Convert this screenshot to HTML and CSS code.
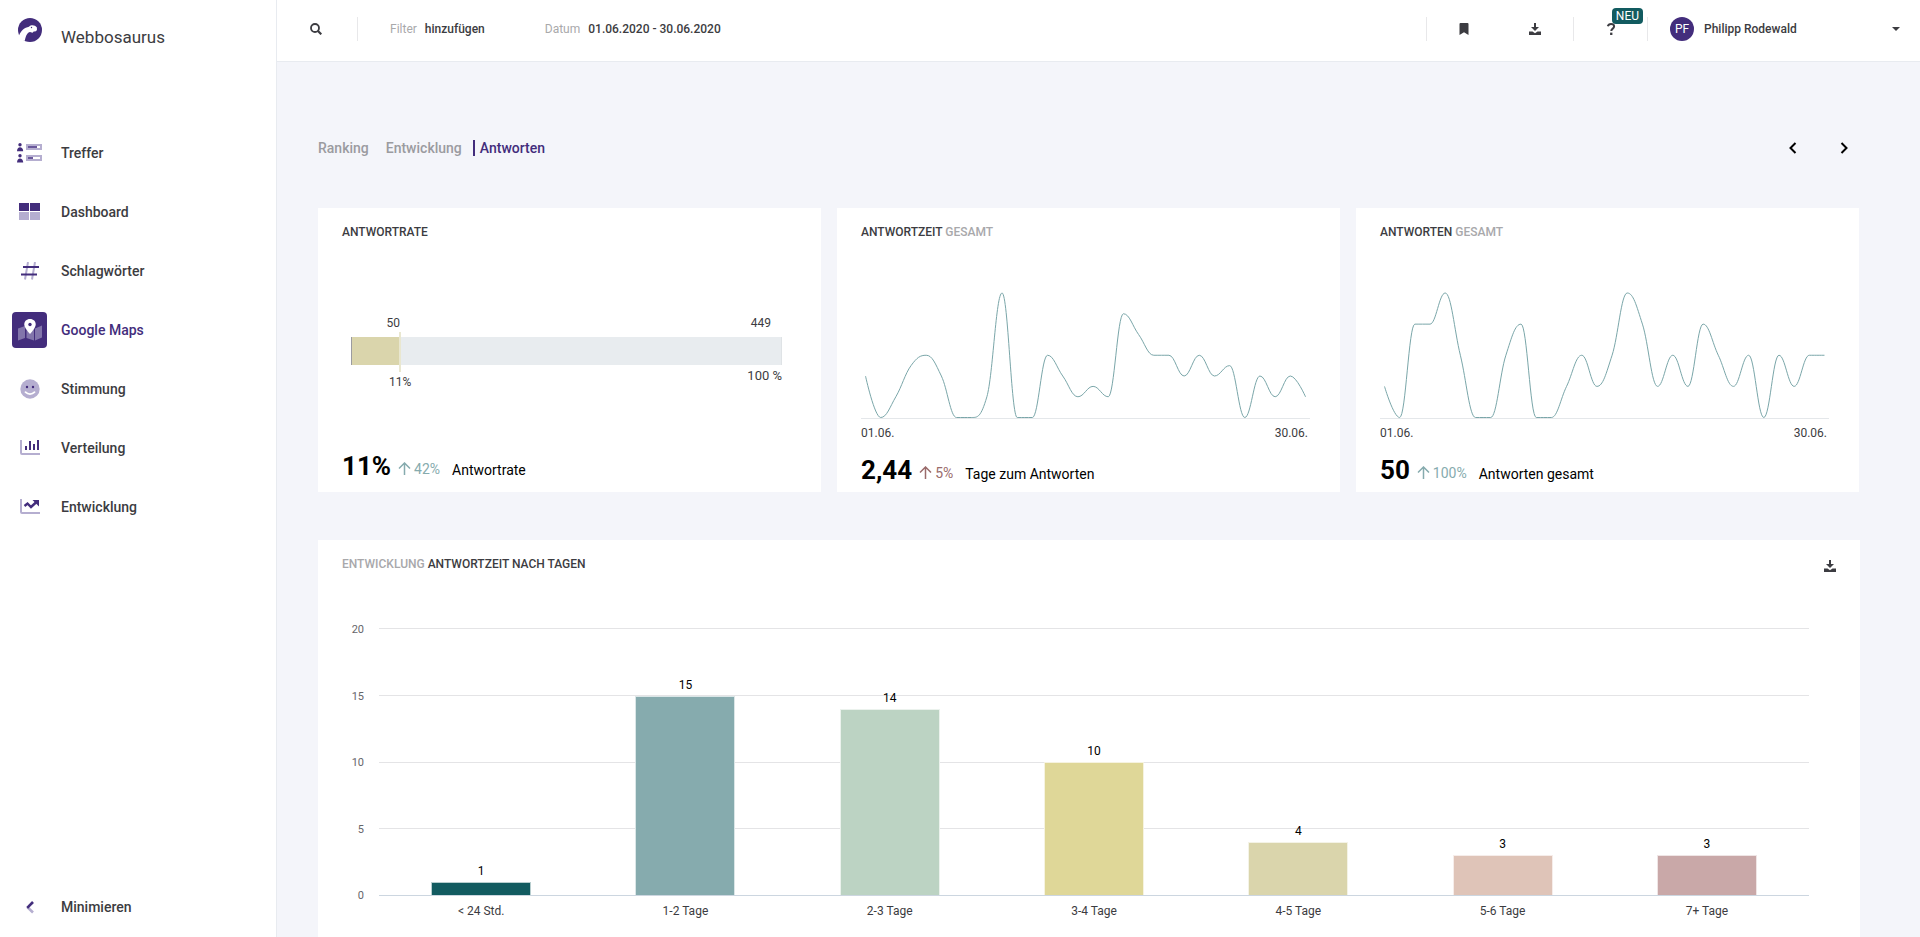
FILE: index.html
```html
<!DOCTYPE html>
<html lang="de">
<head>
<meta charset="utf-8">
<title>Webbosaurus – Google Maps Antworten</title>
<link rel="stylesheet" href="styles.css">
</head>
<body>
<div class="app">
  <aside class="sidebar">
    <a class="brand" href="#">
      <span class="icon-slot"><svg width="24" height="24" viewBox="0 0 24 24"><circle cx="12" cy="12" r="12" fill="#432d7c"/><path d="M1 17.500C3 12.500 6.500 9.500 11 8.700C12.500 7 15 6.800 17 7.800L18.800 9.200L19 11.500C18.600 13.200 17.500 13.800 16 13.300L14.500 14.800L12 14C9.500 14.500 8 17 6.800 22.800L3 22L0 18Z" fill="#fff"/><circle cx="13.500" cy="9.500" r=".7" fill="#432d7c"/></svg></span>
      <span class="brand-name">Webbosaurus</span>
    </a>
    <nav class="nav">
      <a class="nav-item" href="#">
        <span class="icon-slot"><svg width="25" height="20" viewBox="0 0 25 20"><g fill="#432d7c"><circle cx="3" cy="1.800" r="1.700"/><path d="M0 8.200C0 5.500 1.500 4.300 3 4.300S6.200 5.500 6.200 8.200Z"/><circle cx="3" cy="12.800" r="1.700"/><path d="M0 19.600C0 16.700 1.500 15.500 3 15.500S6.200 16.700 6.200 19.600Z"/></g><path d="M9 1h16v6H9zM9 12h16v6H9z" fill="#b5aed0"/><path d="M20 3h3v2h-3zM16 14h7v2h-7z" fill="#fff"/><path d="M11 3h9v2h-9zM11 14h5v2h-5z" fill="#6a589b"/></svg></span>
        <span>Treffer</span>
      </a>
      <a class="nav-item" href="#">
        <span class="icon-slot"><svg width="21" height="18" viewBox="0 0 21 18"><path d="M0 0h10v8H0zM11 0h10v8h-10z" fill="#432d7c"/><path d="M0 9h10v8H0zM11 9h10v8h-10z" fill="#b5aed0"/></svg></span>
        <span>Dashboard</span>
      </a>
      <a class="nav-item" href="#">
        <span class="icon-slot"><svg width="18" height="18" viewBox="0 0 18 18" fill="none" stroke-width="2"><path d="M7 0L4 17.500M14 0L11 17.500" stroke="#b5aed0"/><path d="M2 5H18M0 12.500H16" stroke="#432d7c" stroke-width="2.200"/></svg></span>
        <span>Schlagwörter</span>
      </a>
      <a class="nav-item nav-item-active" href="#">
        <span class="icon-slot"><svg width="24" height="22" viewBox="0 0 24 22"><path d="M0 9.500L7 7V19L0 21.500zM8.500 7L16 10V21.500L8.500 19zM17 9.500L24 6.500V18.500L17 21.500z" fill="#8275ab"/><path d="M12 0C8.500 0 6.300 2.300 6.300 5.500C6.300 8 9 11.500 12 15C15 11.500 17.700 8 17.700 5.500C17.700 2.300 15.500 0 12 0z" fill="#fff"/><circle cx="12" cy="5.500" r="1.700" fill="#432d7c"/></svg></span>
        <span>Google Maps</span>
      </a>
      <a class="nav-item" href="#">
        <span class="icon-slot"><svg width="20" height="20" viewBox="0 0 20 20"><circle cx="10" cy="10" r="9.700" fill="#b5aed0"/><path d="M5.500 13.200C8 15.700 12 15.700 14.500 13.200" fill="none" stroke="#fff" stroke-width="1.800" stroke-linecap="round"/><circle cx="7" cy="8" r="1.200" fill="#432d7c"/><circle cx="13" cy="8" r="1.200" fill="#432d7c"/></svg></span>
        <span>Stimmung</span>
      </a>
      <a class="nav-item" href="#">
        <span class="icon-slot"><svg width="20" height="16" viewBox="0 0 20 16"><path d="M0 0h2v13h18v2H2q-2 0-2-2z" fill="#b5aed0"/><path d="M5 6h2v4H5zM9 1h2v9H9zM13 4h2v6h-2zM17 0h2v10h-2z" fill="#432d7c"/></svg></span>
        <span>Verteilung</span>
      </a>
      <a class="nav-item" href="#">
        <span class="icon-slot"><svg width="20" height="16" viewBox="0 0 20 16"><path d="M0 0h2v13h18v2H2q-2 0-2-2z" fill="#b5aed0"/><path d="M4.500 7L7.500 4.500L11 8L16.500 3" fill="none" stroke="#432d7c" stroke-width="2.400"/><path d="M12.500 1H19V7.500z" fill="#432d7c"/></svg></span>
        <span>Entwicklung</span>
      </a>
    </nav>
    <button class="nav-item nav-toggle" type="button">
      <span class="icon-slot"><svg width="8" height="13" viewBox="0 0 8 13" fill="none" stroke-width="2.600"><path d="M1.500 6.200L7 11.500" stroke="#b5aed0"/><path d="M7 1L1.200 6.800" stroke="#432d7c"/></svg></span>
      <span>Minimieren</span>
    </button>
  </aside>

  <div class="page">
    <header class="topbar">
      <button class="icon-button search" type="button" aria-label="Suche"><svg width="12" height="12" viewBox="0 0 12 12" fill="none" stroke="#3c3c41"><circle cx="5" cy="5" r="4" stroke-width="1.800"/><path d="M8 8L11.300 11.300" stroke-width="2.200"/></svg></button>
      <button class="filter" type="button"><span class="muted">Filter</span><strong>hinzufügen</strong></button>
      <button class="filter filter-date" type="button"><span class="muted">Datum</span><strong>01.06.2020 - 30.06.2020</strong></button>
      <div class="tools">
        <button class="icon-button" type="button" aria-label="Lesezeichen"><svg width="10" height="12" viewBox="0 0 10 12"><path d="M.5 1q0-1 1-1h7q1 0 1 1v11L5 9.300L.5 12z" fill="#3c3c41"/></svg></button>
        <button class="icon-button" type="button" aria-label="Herunterladen"><svg width="12" height="12" viewBox="0 0 12 12" fill="#3c3c41"><path d="M5 0h2v4h3L6 8L2 4h3z"/><path d="M0 8.500h3.500L6 10.300L8.500 8.500H12V12H0z"/></svg></button>
      </div>
      <div class="help"><button class="icon-button" type="button" aria-label="Hilfe"><svg width="10" height="12" viewBox="0 0 10 12"><path d="M1.800 3.300C2.300 1.700 3.500 1.100 5 1.100C7 1.100 8.100 2 8.100 3.500C8.100 5.700 5.300 5.500 5.300 7.900" fill="none" stroke="#3c3c41" stroke-width="2"/><path d="M4.100 9.600h2.300V12H4.100z" fill="#3c3c41"/></svg></button><span class="badge">NEU</span></div>
      <button class="account" type="button"><span class="avatar">PF</span><strong>Philipp Rodewald</strong><svg class="caret" width="8" height="4" viewBox="0 0 8 4"><path d="M0 0h8L4 4z" fill="#3c3c41"/></svg></button>
    </header>

    <main class="content">
      <div class="tabs-row">
        <nav class="tabs">
          <a class="tab" href="#">Ranking</a>
          <a class="tab" href="#">Entwicklung</a>
          <a class="tab tab-active" href="#">Antworten</a>
        </nav>
        <div class="pager">
          <button class="icon-button" type="button" aria-label="Zurück"><svg width="8" height="12" viewBox="0 0 8 12"><path d="M6.500 1L1.500 6L6.500 11" fill="none" stroke="#000" stroke-width="2"/></svg></button>
          <button class="icon-button" type="button" aria-label="Weiter"><svg width="8" height="12" viewBox="0 0 8 12"><path d="M1.500 1L6.500 6L1.500 11" fill="none" stroke="#000" stroke-width="2"/></svg></button>
        </div>
      </div>

      <div class="kpis">
        <section class="card kpi kpi-rate">
          <h2 class="card-title">ANTWORTRATE</h2>
          <div class="gauge">
            <div class="gauge-top"><span class="gauge-part">50</span><span>449</span></div>
            <div class="gauge-track"><div class="gauge-fill" style="width:11.1%"></div></div>
            <div class="gauge-bottom"><span class="gauge-share">11%</span><span class="gauge-total">100 %</span></div>
          </div>
          <p class="figure"><b>11%</b><span class="trend"><svg width="13" height="13" viewBox="0 0 13 13"><path d="M6.500 13V1.500M1 6.500L6.500 1L12 6.500" fill="none" stroke="currentColor" stroke-width="1.500"/></svg>42%</span><span>Antwortrate</span></p>
        </section>
        <section class="card kpi">
          <h2 class="card-title">ANTWORTZEIT <span>GESAMT</span></h2>
          <svg class="spark" viewBox="0 0 449 141" preserveAspectRatio="none" data-max="12" data-values="4,0,2,5,6,4,0,0,2,12,0,0,6,4,2,3,2,10,8,6,6,4,6,4,5,0,4,2,4,2"></svg>
          <div class="range"><span>01.06.</span><span>30.06.</span></div>
          <p class="figure"><b>2,44</b><span class="trend trend-bad"><svg width="13" height="13" viewBox="0 0 13 13"><path d="M6.500 13V1.500M1 6.500L6.500 1L12 6.500" fill="none" stroke="currentColor" stroke-width="1.500"/></svg>5%</span><span>Tage zum Antworten</span></p>
        </section>
        <section class="card kpi">
          <h2 class="card-title">ANTWORTEN <span>GESAMT</span></h2>
          <svg class="spark" viewBox="0 0 449 141" preserveAspectRatio="none" data-max="4" data-values="1,0,3,3,4,2,0,0,2,3,0,0,1,2,1,2,4,3,1,2,1,3,2,1,2,0,2,1,2,2"></svg>
          <div class="range"><span>01.06.</span><span>30.06.</span></div>
          <p class="figure"><b>50</b><span class="trend"><svg width="13" height="13" viewBox="0 0 13 13"><path d="M6.500 13V1.500M1 6.500L6.500 1L12 6.500" fill="none" stroke="currentColor" stroke-width="1.500"/></svg>100%</span><span>Antworten gesamt</span></p>
        </section>
      </div>

      <section class="card days">
        <div class="days-head">
          <h2 class="card-title"><span>ENTWICKLUNG</span> ANTWORTZEIT NACH TAGEN</h2>
          <button class="icon-button" type="button" aria-label="Diagramm herunterladen"><svg width="12" height="12" viewBox="0 0 12 12" fill="#3c3c41"><path d="M5 0h2v4h3L6 8L2 4h3z"/><path d="M0 8.500h3.500L6 10.300L8.500 8.500H12V12H0z"/></svg></button>
        </div>
        <div class="chart">
          <div class="y-axis"><span>20</span><span>15</span><span>10</span><span>5</span><span>0</span></div>
          <div class="plot">
            <div class="grid-lines"><i></i><i></i><i></i><i></i><i></i></div>
            <div class="bars">
              <div class="column"><span>1</span><div class="bar bar-1" style="height:5%"></div></div>
              <div class="column"><span>15</span><div class="bar bar-2" style="height:75%"></div></div>
              <div class="column"><span>14</span><div class="bar bar-3" style="height:70%"></div></div>
              <div class="column"><span>10</span><div class="bar bar-4" style="height:50%"></div></div>
              <div class="column"><span>4</span><div class="bar bar-5" style="height:20%"></div></div>
              <div class="column"><span>3</span><div class="bar bar-6" style="height:15%"></div></div>
              <div class="column"><span>3</span><div class="bar bar-7" style="height:15%"></div></div>
            </div>
          </div>
          <div class="x-axis"><span>&lt; 24 Std.</span><span>1-2 Tage</span><span>2-3 Tage</span><span>3-4 Tage</span><span>4-5 Tage</span><span>5-6 Tage</span><span>7+ Tage</span></div>
        </div>
      </section>
    </main>
  </div>
</div>
<script src="script.js"></script>
</body>
</html>
```

FILE: styles.css
```css
* { box-sizing: border-box; }

body {
  margin: 0;
  font-family: Roboto, "Liberation Sans", sans-serif;
  font-size: 12px;
  line-height: 16px;
  color: #3c3c41;
  background: #f4f5fa;
}

button {
  padding: 0;
  border: 0;
  background: none;
  font: inherit;
  color: inherit;
  cursor: pointer;
}

a { color: inherit; text-decoration: none; }
strong { font-weight: 500; }
svg { display: block; flex: none; }

.app { display: flex; min-height: 100vh; }

/* Sidebar */
.sidebar {
  display: flex;
  flex-direction: column;
  flex: none;
  width: 277px;
  padding: 18px 12px;
  background: #fff;
  border-right: 1px solid #e8ebf0;
}

.icon-slot {
  display: flex;
  align-items: center;
  justify-content: center;
  flex: none;
  width: 35px;
}

.brand { display: flex; gap: 14px; }
.brand .icon-slot { height: 24px; }
.brand-name { padding-top: 7px; font-size: 17px; line-height: 24px; }

.nav {
  display: flex;
  flex-direction: column;
  gap: 23px;
  margin-top: 86px;
}

.nav-item {
  display: flex;
  align-items: center;
  gap: 14px;
  font-size: 14px;
  font-weight: 500;
}

.nav-item .icon-slot { height: 36px; }
.nav-item-active { color: #432d7c; }
.nav-item-active .icon-slot { background: #432d7c; border-radius: 4px; }
.nav-toggle { margin-top: auto; }

/* Top bar */
.page { display: flex; flex-direction: column; flex: 1; min-width: 0; }

.topbar {
  display: flex;
  align-items: center;
  height: 62px;
  padding-bottom: 3px;
  background: #fff;
  border-bottom: 1px solid #e8ebf0;
}

.icon-button { display: flex; align-items: center; justify-content: center; }
.muted { color: #a9a9ab; }

.search {
  width: 81px;
  height: 24px;
  padding: 0 18px 0 16px;
  border-right: 1px solid #e8e8ea;
}

.filter { display: flex; gap: 8px; margin-left: 32px; }
.filter-date { margin-left: 60px; }

.tools {
  display: flex;
  align-items: center;
  gap: 60px;
  height: 24px;
  margin-left: auto;
  padding: 0 32px;
  border: solid #e8e8ea;
  border-width: 0 1px;
}

.help {
  position: relative;
  display: flex;
  align-items: center;
  width: 74px;
  height: 24px;
  padding-left: 32px;
  border-right: 1px solid #e8e8ea;
}

.badge {
  position: absolute;
  top: -9px;
  right: 4px;
  padding: 0 4px;
  border-radius: 4px;
  background: #125b60;
  color: #fff;
}

.account { display: flex; align-items: center; width: 272px; padding: 0 20px 0 22px; }

.avatar {
  width: 24px;
  margin-right: 10px;
  border-radius: 50%;
  background: #432d7c;
  color: #fff;
  line-height: 24px;
  text-align: center;
}

.caret { margin-left: auto; }

/* Content */
.content {
  display: flex;
  flex-direction: column;
  flex: 1;
  padding: 74px 60px 0 41px;
}

.tabs-row { display: flex; align-items: center; justify-content: space-between; height: 24px; }
.tabs { display: flex; gap: 17px; font-size: 14px; font-weight: 500; color: #9b9ba0; }
.tab-active { margin-left: -6px; padding-left: 5px; border-left: 2px solid #432d7c; color: #432d7c; }
.pager { display: flex; gap: 43px; padding-right: 12px; }

.kpis {
  display: grid;
  grid-template-columns: repeat(3, 1fr);
  gap: 16px;
  margin-top: 48px;
  padding-right: 1px;
}

.card { padding: 16px 24px 0; background: #fff; }
.card-title { margin: 0; font-size: 12px; font-weight: 500; line-height: 16px; }
.card-title span { color: #a8a8ab; }

.kpi { display: flex; flex-direction: column; min-height: 284px; padding-bottom: 2px; }
.kpi-rate { padding-bottom: 6px; }

.gauge { margin: 75px 15px 0 9px; }
.gauge-top, .gauge-bottom { display: flex; justify-content: space-between; }
.gauge-top { padding: 0 11px 6px 0; }
.gauge-part { width: 49px; text-align: right; }
.gauge-bottom { padding-top: 3px; }
.gauge-share { margin: 6px 0 0 38px; }
.gauge-total { font-size: 13px; }

.gauge-track { height: 28px; background: #e8ecef; border-left: 1px solid #9b9ba0; border-right: 1px solid #dfe3e6; }
.gauge-fill { position: relative; height: 100%; background: #dad5ac; }
.gauge-fill::after {
  content: "";
  position: absolute;
  top: -5px;
  bottom: -7px;
  right: -1px;
  width: 2px;
  background: #e9e7d0;
}

.spark { width: calc(100% - 6px); height: 141px; margin-top: 38px; overflow: visible; }
.spark path { fill: none; stroke: #7aa6a9; vector-effect: non-scaling-stroke; }
.spark .axis { stroke: #e4e7ea; }
.range { display: flex; justify-content: space-between; padding: 6px 8px 0 0; }

.figure {
  display: flex;
  align-items: baseline;
  margin: auto 0 0;
  font-size: 14px;
  line-height: 32px;
  color: #000;
}

.figure b { font-size: 26px; font-weight: 700; }
.trend { display: flex; align-items: center; gap: 3px; margin: 0 12px 0 7px; color: #86abae; }
.trend-bad { color: #9a6b6b; }

/* Answer time by days */
.days { flex: 1; margin-top: 48px; padding-bottom: 24px; }
.days-head { display: flex; justify-content: space-between; }
.days-head .icon-button { height: 20px; }

.chart {
  display: grid;
  grid-template-columns: 22px 1fr;
  grid-template-rows: 268px auto;
  column-gap: 15px;
  row-gap: 7px;
  padding: 52px 27px 0 0;
}

.y-axis {
  display: flex;
  flex-direction: column;
  justify-content: space-between;
  margin: -6px 0 -8px;
  font-size: 11px;
  text-align: right;
  color: #66666a;
}

.plot { display: grid; }
.grid-lines, .bars { grid-area: 1 / 1; }
.grid-lines { display: flex; flex-direction: column; justify-content: space-between; }
.grid-lines i { height: 1px; background: #e4e4e6; }
.grid-lines i:last-child { background: #ccd6e0; }

.bars, .x-axis { display: grid; grid-template-columns: repeat(7, 1fr); text-align: center; }
.bars { color: #000; padding: 1px 0; }
.column { display: flex; flex-direction: column; justify-content: flex-end; align-items: center; height: 266px; }
.column span { margin-bottom: 3px; }
.bar { flex: none; width: 49%; border: 1px solid rgba(255, 255, 255, 0.7); border-bottom: 0; }
.bar-1 { background: #125b60; }
.bar-2 { background: #86abae; }
.bar-3 { background: #bcd3c3; }
.bar-4 { background: #dfd798; }
.bar-5 { background: #dad5ac; }
.bar-6 { background: #dfc4b8; }
.bar-7 { background: #c9a8a8; }
.x-axis { grid-column: 2; }
```

FILE: script.js
```js
// Draws each sparkline as a smooth curve that never overshoots its points.
const NS = "http://www.w3.org/2000/svg";
const SMOOTH = 1.5;

function splinePath(points) {
  let d = `M${points[0].x} ${points[0].y}`;
  let out = points[0];
  for (let i = 1; i < points.length; i++) {
    const prev = points[i - 1];
    const p = points[i];
    const next = points[i + 1];
    let inX = p.x, inY = p.y, outX = p.x, outY = p.y;
    if (next) {
      inX = (SMOOTH * p.x + prev.x) / (SMOOTH + 1);
      inY = (SMOOTH * p.y + prev.y) / (SMOOTH + 1);
      outX = (SMOOTH * p.x + next.x) / (SMOOTH + 1);
      outY = (SMOOTH * p.y + next.y) / (SMOOTH + 1);
      const shift = ((outY - inY) * (outX - p.x)) / (outX - inX) + p.y - outY;
      inY += shift;
      outY += shift;
      const clamp = (v, a, b) => Math.min(Math.max(v, Math.min(a, b)), Math.max(a, b));
      if (clamp(inY, prev.y, p.y) !== inY) {
        inY = clamp(inY, prev.y, p.y);
        outY = 2 * p.y - inY;
      }
      if (clamp(outY, next.y, p.y) !== outY) {
        outY = clamp(outY, next.y, p.y);
        inY = 2 * p.y - outY;
      }
    }
    d += `C${out.x} ${out.y} ${inX} ${inY} ${p.x} ${p.y}`;
    out = { x: outX, y: outY };
  }
  return d;
}

function addPath(svg, d, className) {
  const path = document.createElementNS(NS, "path");
  path.setAttribute("d", d);
  path.setAttribute("class", className);
  svg.append(path);
}

document.querySelectorAll(".spark").forEach((svg) => {
  const values = svg.dataset.values.split(",").map(Number);
  const max = Number(svg.dataset.max);
  const step = 440 / (values.length - 1);
  const points = values.map((v, i) => ({ x: 4.5 + i * step, y: 139.5 - (v / max) * 124.5 }));
  addPath(svg, "M0 140.5H449", "axis");
  addPath(svg, splinePath(points), "line");
});
```
